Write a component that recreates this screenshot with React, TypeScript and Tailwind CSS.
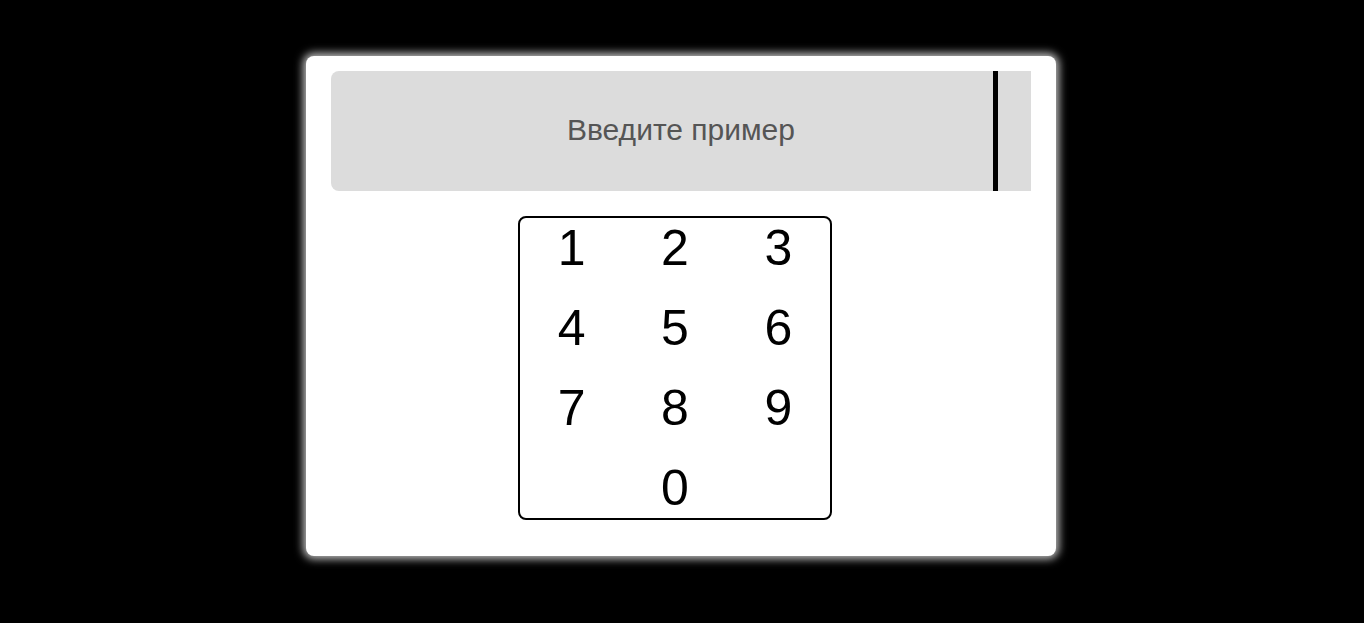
import React from "react"

const keys = ["1", "2", "3", "4", "5", "6", "7", "8", "9", "", "0", ""]

export default function App() {
    return (
        <div className="flex min-h-[623px] w-full justify-center bg-black pr-[2px] pt-[56px] font-['Liberation_Sans',Arial,sans-serif]">
            <div className="flex h-[500px] w-[750px] flex-col items-center rounded-lg bg-white px-[25px] pt-[15px] shadow-[0_0_8px_3px_rgba(255,255,255,0.75)]">
                {/* display */}
                <div className="relative flex h-[120px] w-[700px] items-center justify-center rounded-l-lg bg-[#dcdcdc] pb-[3px]">
                    <span className="text-[30px] text-[#555]">Введите пример</span>
                    <div className="absolute right-[33px] top-0 h-full w-[5px] bg-black" />
                </div>

                {/* keypad */}
                <div className="mr-[12px] mt-[25px] grid h-[304px] w-[314px] grid-cols-3 content-start gap-y-[23px] rounded-lg border-2 border-black pt-[2px]">
                    {keys.map((k, i) => (
                        <div key={i} className="h-[57px] text-center text-[50px] leading-[57px] text-black">
                            {k}
                        </div>
                    ))}
                </div>
            </div>
        </div>
    )
}
